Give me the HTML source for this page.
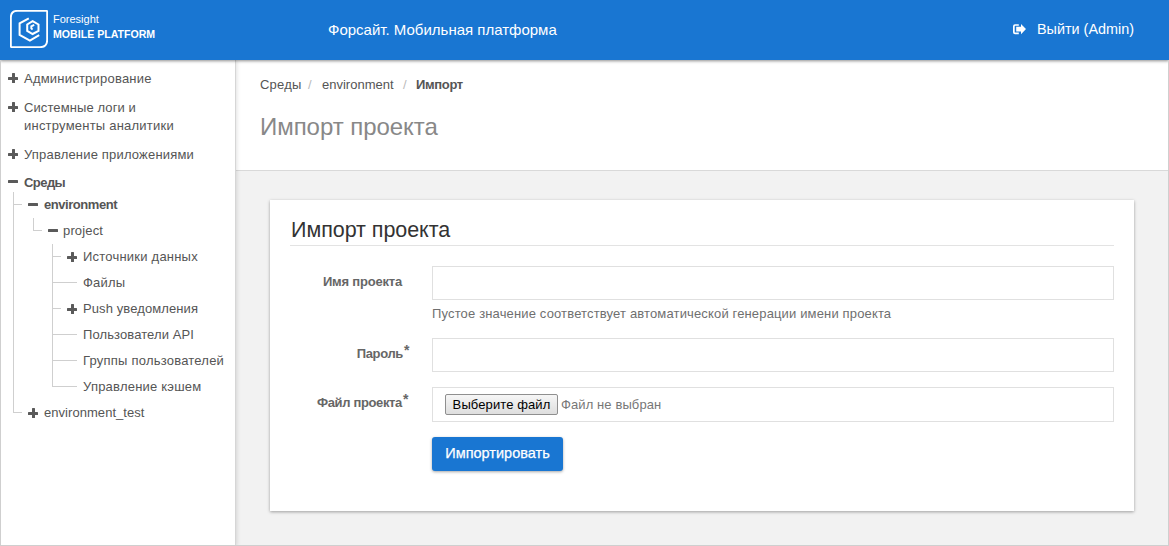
<!DOCTYPE html>
<html><head><meta charset="utf-8">
<style>
*{box-sizing:border-box;margin:0;padding:0}
html,body{width:1169px;height:546px;overflow:hidden;background:#fff;font-family:"Liberation Sans",sans-serif}
#frame{position:absolute;left:0;top:60px;width:1169px;height:486px;border:1px solid #cfcfcf;border-top:none;z-index:50}
#hdr{position:absolute;left:0;top:0;width:1169px;height:60px;background:#1976d2;z-index:5;box-shadow:0 1px 3px rgba(0,0,0,.45)}
#logo{position:absolute;left:10px;top:10px;width:38px;height:38px}
#brand1{position:absolute;left:53px;top:13px;color:#fff;font-size:11px;line-height:13px}
#brand2{position:absolute;left:53px;top:28px;color:#fff;font-size:10.6px;font-weight:bold;line-height:13px}
#title{position:absolute;left:328px;top:21px;color:#fff;font-size:15px;line-height:17px}
#logout{position:absolute;left:1013px;top:21px;color:#fff;font-size:14.4px;line-height:17px;white-space:nowrap}
#side{position:absolute;left:0;top:60px;width:236px;height:486px;background:#fff;border-right:1px solid #d6d6d6;z-index:2;box-shadow:1px 0 4px rgba(0,0,0,.12)}
#main{position:absolute;left:236px;top:60px;width:933px;height:486px;background:#f2f2f2}
#top{position:absolute;left:0;top:0;width:933px;height:111px;background:#fff;border-bottom:1px solid #d9d9d9}
.t{position:absolute;white-space:nowrap;color:#555;font-size:13px;line-height:15px;letter-spacing:0.22px}
#card{position:absolute;left:34px;top:140px;width:864px;height:311px;background:#fff;box-shadow:0 1px 3px rgba(0,0,0,.35)}
.b{font-weight:bold;color:#555;letter-spacing:-0.33px}
.sl{color:#bbb;letter-spacing:0}
.ln{position:absolute;background:#cfcfcf}
.pl,.mi{position:absolute;width:10px;height:10px}
.pl::before{content:"";position:absolute;left:0;top:3.5px;width:10px;height:3px;background:#5a5a5a;border-radius:0.5px}
.mi::before{content:"";position:absolute;left:0;top:0;width:10px;height:3px;background:#5a5a5a;border-radius:0.5px}
.pl::after{content:"";position:absolute;left:3.5px;top:0;width:3px;height:10px;background:#5a5a5a;border-radius:0.5px}
.lb{font-weight:bold;color:#666;letter-spacing:-0.35px}
.ast{position:absolute;left:100%;top:-3px;font-size:14px;margin-left:1px;letter-spacing:0}
#fbtn{position:absolute;left:175px;top:194px;width:113px;height:21px;border:1px solid #8f8f8f;border-radius:2px;background:linear-gradient(#f6f6f6,#dedede);font-size:13px;line-height:19px;color:#000;text-align:center;letter-spacing:0.1px;white-space:nowrap}
#ibtn{position:absolute;left:162px;top:237px;width:131px;height:34px;border-radius:3px;background:#1976d2;box-shadow:0 1px 3px rgba(0,0,0,.35);color:#fff;font-size:14.5px;line-height:32px;text-align:center;white-space:nowrap;-webkit-text-stroke:0.25px #fff}
.inp{position:absolute;background:#fff;border:1px solid #e0e0e0}
</style></head><body>
<div id="frame"></div>
<div id="hdr">
  <svg id="logo" viewBox="0 0 38 38" fill="none" stroke="#fff" stroke-width="1.9"><path d="M7.5 0.85H36.3Q37.15 0.85 37.15 1.7V30Q37.15 37.15 30 37.15H1.7Q0.85 37.15 0.85 36.3V7.5Q0.85 0.85 7.5 0.85Z"/><path d="M18.8 8.3L9.6 13.3V24.8L19.9 30.5L29.2 25.1" stroke-width="2"/><path d="M22.6 11.2L28.5 14.5V20.9L22.6 24L17.2 20.9V14.5Z" stroke-width="2"/><path d="M24.2 14.8L21.3 16.3V18.4L22.6 19.5" stroke-width="1.9"/></svg>
  <div id="brand1">Foresight</div>
  <div id="brand2">MOBILE PLATFORM</div>
  <div id="title">Форсайт. Мобильная платформа</div>
  <div id="logout"><svg width="14" height="11" viewBox="0 0 14 11" style="position:absolute;left:0;top:3px" fill="#fff"><path d="M5.8 0.2H2Q0 0.2 0 2.2V8.2Q0 10.2 2 10.2H5.8V8.6H2.3Q1.7 8.6 1.7 8V2.4Q1.7 1.8 2.3 1.8H5.8Z"/><path d="M3.2 2.7H8V0L13 5.1L8 10.2V7.5H3.2Z"/></svg><span style="position:absolute;left:24px;top:0">Выйти&nbsp;(Admin)</span></div>
</div>
<div id="side">
  <i class="pl" style="left:8px;top:13px"></i><div class="t" style="left:24px;top:11px">Администрирование</div>
  <i class="pl" style="left:8px;top:42px"></i><div class="t" style="left:24px;top:40px;letter-spacing:0.1px">Системные логи и</div>
  <div class="t" style="left:24px;top:58px">инструменты аналитики</div>
  <i class="pl" style="left:8px;top:89px"></i><div class="t" style="left:24px;top:87px;letter-spacing:0.18px">Управление приложениями</div>
  <i class="mi" style="left:8px;top:120px"></i><div class="t b" style="left:24px;top:115px;letter-spacing:-0.55px">Среды</div>
  <i class="ln" style="left:13px;top:132px;width:1px;height:221px"></i>
  <i class="ln" style="left:13px;top:144px;width:9px;height:1px"></i>
  <i class="mi" style="left:28px;top:143px"></i><div class="t b" style="left:44px;top:137px;letter-spacing:-0.45px">environment</div>
  <i class="ln" style="left:33px;top:158px;width:1px;height:13px"></i>
  <i class="ln" style="left:33px;top:170px;width:9px;height:1px"></i>
  <i class="mi" style="left:48px;top:169px"></i><div class="t" style="left:63px;top:163px;letter-spacing:0.15px">project</div>
  <i class="ln" style="left:52px;top:184px;width:1px;height:143px"></i>
  <i class="ln" style="left:52px;top:196px;width:9px;height:1px"></i>
  <i class="pl" style="left:67px;top:192px"></i><div class="t" style="left:83px;top:189px">Источники данных</div>
  <i class="ln" style="left:52px;top:222px;width:25px;height:1px"></i>
  <div class="t" style="left:83px;top:215px">Файлы</div>
  <i class="ln" style="left:52px;top:248px;width:9px;height:1px"></i>
  <i class="pl" style="left:67px;top:244px"></i><div class="t" style="left:83px;top:241px;letter-spacing:0.1px">Push уведомления</div>
  <i class="ln" style="left:52px;top:274px;width:25px;height:1px"></i>
  <div class="t" style="left:83px;top:267px;letter-spacing:0.1px">Пользователи API</div>
  <i class="ln" style="left:52px;top:300px;width:25px;height:1px"></i>
  <div class="t" style="left:83px;top:293px">Группы пользователей</div>
  <i class="ln" style="left:52px;top:326px;width:25px;height:1px"></i>
  <div class="t" style="left:83px;top:319px">Управление кэшем</div>
  <i class="ln" style="left:13px;top:352px;width:9px;height:1px"></i>
  <i class="pl" style="left:28px;top:348px"></i><div class="t" style="left:44px;top:345px;letter-spacing:0.05px">environment_test</div>
</div>
<div id="main">
  <div id="top">
    <div class="t" style="left:24px;top:17px">Среды</div>
    <div class="t sl" style="left:72px;top:17px">/</div>
    <div class="t" style="left:86px;top:17px;letter-spacing:0">environment</div>
    <div class="t sl" style="left:167px;top:17px">/</div>
    <div class="t b" style="left:180px;top:17px">Импорт</div>
    <div class="t" style="left:24px;top:53px;font-size:24px;line-height:28px;color:#888;letter-spacing:-0.05px">Импорт проекта</div>
  </div>
  <div id="card">
    <div class="t" style="left:21px;top:18px;font-size:21.5px;line-height:24px;color:#333;letter-spacing:-0.05px">Импорт проекта</div>
    <div style="position:absolute;left:20px;top:45px;width:824px;height:1px;background:#e3e3e3"></div>
    <div class="t lb" style="right:732px;top:74px;letter-spacing:-0.2px">Имя проекта</div>
    <div class="inp" style="left:162px;top:66px;width:682px;height:34px"></div>
    <div class="t" style="left:162px;top:106px;color:#6f6f6f;letter-spacing:0.15px">Пустое значение соответствует автоматической генерации имени проекта</div>
    <div class="t lb" style="right:731px;top:146px">Пароль<span class="ast">*</span></div>
    <div class="inp" style="left:162px;top:138px;width:682px;height:34px"></div>
    <div class="t lb" style="right:732px;top:195px">Файл проекта<span class="ast">*</span></div>
    <div class="inp" style="left:162px;top:187px;width:682px;height:35px"></div>
    <div id="fbtn">Выберите файл</div>
    <div class="t" style="left:291px;top:197px;color:#777;letter-spacing:0.1px">Файл не выбран</div>
    <div id="ibtn">Импортировать</div>
  </div>
</div>
</body></html>
